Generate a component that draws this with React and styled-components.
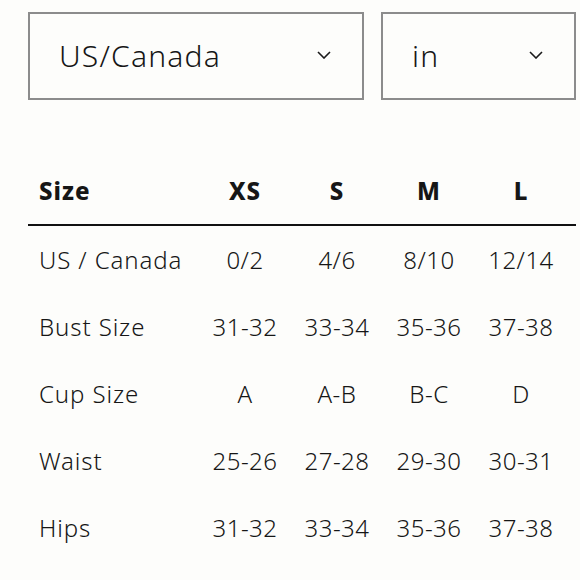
import React from "react";
import styled, { createGlobalStyle } from "styled-components";

const Global = createGlobalStyle`
  html, body { margin: 0; padding: 0; background: #fdfdfb; }
  body { font-family: "Noto Sans", Lato, sans-serif; color: #161616; }
`;

const Page = styled.div`
  width: 548px;
  padding: 12px 0 0 28px;
`;

const Controls = styled.div`
  display: flex;
  gap: 17px;
`;

const Select = styled.div`
  box-sizing: border-box;
  width: ${(p) => p.$w}px;
  height: 88px;
  border: 2px solid #8c8c8c;
  display: flex;
  align-items: center;
  justify-content: space-between;
  padding: 0 31px 2px 29px;
  font-size: 30px;
  font-weight: 300;
  letter-spacing: 1.2px;
`;

const Chevron = () => (
  <svg width="14" height="8" viewBox="0 0 14 8" fill="none">
    <path d="M1 1 L7 7 L13 1" stroke="#1a1a1a" strokeWidth="1.6" />
  </svg>
);

const Table = styled.div`
  margin-top: 56px;
  width: 548px;
`;

const Row = styled.div`
  display: grid;
  grid-template-columns: 171px repeat(4, 92px);
  height: ${(p) => (p.$head ? "68px" : "67px")};
  border-bottom: ${(p) => (p.$head ? "2px solid #111" : "none")};
`;

const Cell = styled.div`
  display: flex;
  align-items: center;
  justify-content: ${(p) => (p.$label ? "flex-start" : "center")};
  padding-left: ${(p) => (p.$label ? "11px" : "0")};
  font-size: 24px;
  font-weight: ${(p) => (p.$head ? 800 : 300)};
  letter-spacing: ${(p) => (p.$head ? "1px" : p.$label ? "0.9px" : "0.5px")};
  white-space: nowrap;
`;

const sizes = ["XS", "S", "M", "L"];
const rows = [
  ["US / Canada", "0/2", "4/6", "8/10", "12/14"],
  ["Bust Size", "31-32", "33-34", "35-36", "37-38"],
  ["Cup Size", "A", "A-B", "B-C", "D"],
  ["Waist", "25-26", "27-28", "29-30", "30-31"],
  ["Hips", "31-32", "33-34", "35-36", "37-38"],
];

export default function App() {
  return (
    <Page>
      <Global />
      <Controls>
        <Select $w={336}>
          <span>US/Canada</span>
          <Chevron />
        </Select>
        <Select $w={195}>
          <span>in</span>
          <Chevron />
        </Select>
      </Controls>
      <Table>
        <Row $head>
          <Cell $head $label>Size</Cell>
          {sizes.map((s) => (
            <Cell $head key={s}>{s}</Cell>
          ))}
        </Row>
        {rows.map((r) => (
          <Row key={r[0]}>
            {r.map((v, i) => (
              <Cell key={i} $label={i === 0}>{v}</Cell>
            ))}
          </Row>
        ))}
      </Table>
    </Page>
  );
}
